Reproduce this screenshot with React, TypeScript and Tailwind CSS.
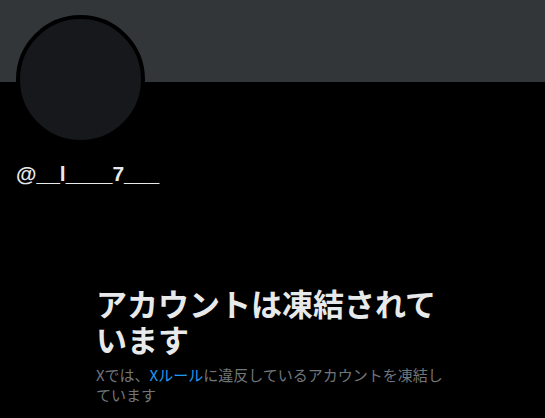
export default function App() {
  return (
    <div className="w-[545px] h-[418px] bg-black overflow-hidden">
      {/* banner */}
      <div className="h-[82px] bg-[#333639]"></div>

      {/* avatar */}
      <div className="-mt-[67px] ml-[16px] w-[129px] h-[129px] rounded-full border-[4px] border-black bg-[#16181c] relative"></div>

      {/* handle */}
      <div className="mt-[18px] pl-[16px] text-[21px] leading-[24px] font-bold text-[#e7e9ea] font-['Liberation_Sans',sans-serif]">
        @__l____7___
      </div>

      {/* message */}
      <div className="mt-[99px] pl-[96px]">
        <div className="w-[348px]">
          <h1 className="text-[31px] leading-[36px] font-bold text-[#e7e9ea] font-['Noto_Sans_CJK_JP',sans-serif]">
            アカウントは凍結されています
          </h1>
          <p className="mt-[8px] text-[15px] leading-[20px] text-[#71767b] font-['Noto_Sans_CJK_JP',sans-serif]">
            Xでは、<span className="text-[#1d9bf0]">Xルール</span>に違反しているアカウントを凍結しています
          </p>
        </div>
      </div>
    </div>
  );
}
